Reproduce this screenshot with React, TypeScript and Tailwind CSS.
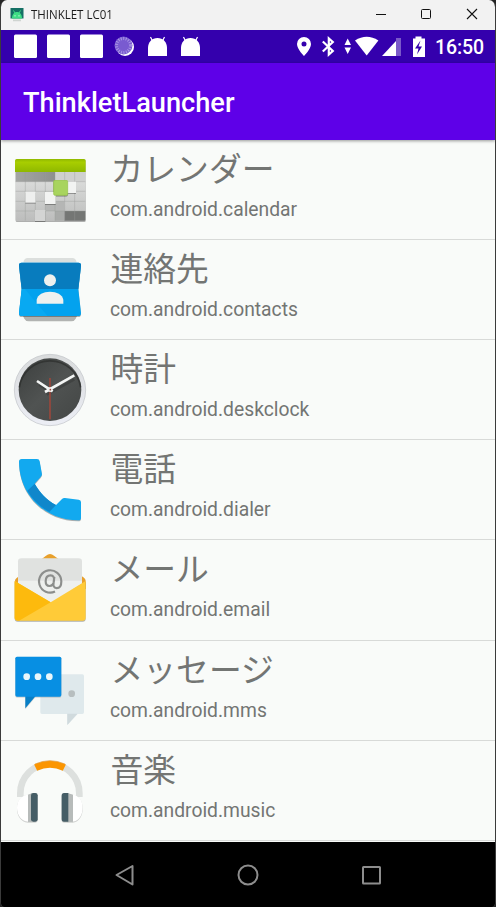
import type { ReactNode } from "react";

const roboto = "font-[Roboto,'Noto_Sans_CJK_JP',sans-serif]";

function AppIcon({ children }: { children: ReactNode }) {
  return (
    <svg className="h-[100px] w-[109px] shrink-0" viewBox="3 0 327 300">
      {children}
    </svg>
  );
}

const soft = { filter: "drop-shadow(0 3px 2px rgba(0,0,0,.3))" };

function CalendarIcon() {
  return (
    <AppIcon>
      <defs>
        <linearGradient id="calGreen" x1="0" y1="0" x2="0" y2="1">
          <stop offset="0" stopColor="#91b900" />
          <stop offset=".25" stopColor="#a8ce00" />
          <stop offset="1" stopColor="#8fb800" />
        </linearGradient>
        <linearGradient id="calGrid" x1="0" y1="0" x2="0" y2="1">
          <stop offset="0" stopColor="#c4c5c4" />
          <stop offset=".3" stopColor="#dcdddc" />
          <stop offset="1" stopColor="#bcbdbc" />
        </linearGradient>
        <linearGradient id="calDark" x1="0" y1="0" x2="1" y2="0">
          <stop offset="0" stopColor="#a4a6a4" />
          <stop offset="1" stopColor="#8e908e" />
        </linearGradient>
      </defs>
      <g style={soft}>
        <rect x="47" y="59" width="210" height="184" rx="4" fill="url(#calGrid)" />
      </g>
      <rect x="47" y="96" width="118" height="29" fill="url(#calDark)" />
      <rect x="165" y="96" width="91" height="29" fill="#cfd0cf" />
      <path d="M193 213h63v26q0 3-3 3h-60z" fill="#747674" />
      <rect x="165" y="213" width="28" height="29" fill="#a9aba9" />
      <rect x="136" y="184" width="57" height="29" fill="#b5b6b5" />
      <path d="M76 96v146M106 96v146M136 96v146M165 96v146M194 96v146M224 96v146M47 125h209M47 154h209M47 184h209M47 213h209" stroke="#999b99" strokeWidth="1.5" fill="none" opacity=".75" />
      <path d="M45 96V62q0-5 5-5h202q5 0 5 5v34z" fill="url(#calGreen)" />
      <g style={soft}>
        <rect x="76" y="155" width="31" height="33" fill="#eeefee" />
        <rect x="105" y="210" width="31" height="33" fill="#d3d4d3" />
        <rect x="135" y="156" width="32" height="36" fill="#f2f3f2" />
        <rect x="198" y="125" width="30" height="34" fill="#f2f3f2" />
        <rect x="161" y="121" width="42" height="45" rx="4" fill="#a8d45e" stroke="#94c246" strokeWidth="2" />
      </g>
    </AppIcon>
  );
}

function ContactsIcon() {
  return (
    <AppIcon>
      <path d="M70 68q2-14 13-14h134q11 0 13 14z" fill="#dcdfdd" />
      <path d="M68 226h164l-5 10q-4 8-13 8H86q-9 0-13-8z" fill="#b1b3b1" />
      <g style={soft}>
        <path d="M57 77q-1-9 8-9h170q9 0 8 9l-8 70 8 71q1 10-9 10H66q-10 0-9-10l8-71z" fill="#03a2ee" />
      </g>
      <path d="M57 77q-1-9 8-9h170q9 0 8 9l-8 70H65z" fill="#087cbe" />
      <path d="M111 191l32 37H66q-8 0-9-8l8-73h60z" fill="#08a9f2" />
      <path d="M111 191L75 147h60z" fill="#03a2ee" />
      <circle cx="150" cy="121" r="18" fill="#eef1ef" />
      <path d="M110 191v-12c3-16 20-24 40-24s37 8 40 24v12z" fill="#eef1ef" />
    </AppIcon>
  );
}

function ClockIcon() {
  return (
    <AppIcon>
      <defs>
        <linearGradient id="clockRim" x1="0" y1="0" x2="0" y2="1">
          <stop offset="0" stopColor="#d9dbdc" />
          <stop offset="1" stopColor="#eceef5" />
        </linearGradient>
        <linearGradient id="clockFace" x1="0" y1="0" x2="1" y2="1">
          <stop offset="0" stopColor="#3c3f3e" />
          <stop offset=".5" stopColor="#505352" />
          <stop offset="1" stopColor="#434645" />
        </linearGradient>
      </defs>
      <circle cx="150" cy="150" r="107" fill="url(#clockRim)" stroke="#bfc2c7" strokeWidth="2" />
      <circle cx="150" cy="149" r="94" fill="url(#clockFace)" />
      <path d="M58 142a93 93 0 0 1 184 0" fill="none" stroke="#292b2a" strokeWidth="5" opacity=".65" />
      <path d="M140 164l83-46M118 134l38 25" stroke="#292b2a" strokeWidth="8" opacity=".35" />
      <path d="M150 114v124" stroke="#98483d" strokeWidth="5" />
      <path d="M135 156l88-50M111 123l47 31" stroke="#f4f6f5" strokeWidth="8" />
      <circle cx="150" cy="149" r="7" fill="#edf0ef" />
      <circle cx="151" cy="149" r="2.5" fill="#9c4238" />
    </AppIcon>
  );
}

function PhoneIcon() {
  return (
    <AppIcon>
      <g style={soft}>
        <path d="M65 57h46q7 0 8 7l7 39q0 4-4 8l-18 20c17 29 37 50 64 64l18-18q4-4 9-3l41 5q7 1 7 8v46q0 8-8 8C135 240 58 166 57 65q0-8 8-8z" fill="#12a9ef" />
      </g>
      <path d="M82 152l22-21c17 29 37 49 64 64l-20 21c-28-15-50-37-66-64z" fill="#1087cb" />
    </AppIcon>
  );
}

function MailIcon() {
  return (
    <AppIcon>
      <path d="M45 122q0-5 5-8l88-67q12-10 24 0l90 66q5 4 5 9v25H45z" fill="#e8a02b" />
      <path d="M54 130V65q0-10 10-10h172q10 0 10 10v65l-95 57z" fill="#e0e2e0" />
      <path d="M54 122h192v9l-95 57-97-57z" fill="#eef0ee" />
      <g style={soft}>
        <path d="M44 123l108 64 105-64v110q0 9-9 9H53q-9 0-9-9z" fill="#ffcb38" />
      </g>
      <path d="M44 123l108 64-95 55q-13 0-13-9z" fill="#fdba0d" />
      <path d="M165 154.500a33.500 33.500 0 1 1 19-31c0 16-7 21-14 21-9 0-11-8-9-18l2-16M162 122c-1 10-7 16-14 16-8 0-11-6-11-14 0-11 6-18 15-18 8 0 11 6 10 16z" fill="none" stroke="#8c8e8c" strokeWidth="6.500" />
    </AppIcon>
  );
}

function MessagesIcon() {
  return (
    <AppIcon>
      <path d="M126 100h121q5 0 5 5v109q0 5-5 5h-14l-31 33v-33h-76q-5 0-5-5V105q0-5 5-5z" fill="#dfe9ec" />
      <path d="M202 218h30l-30 34z" fill="#d0dadd" />
      <circle cx="215" cy="158" r="10" fill="#b7bebf" />
      <g style={{ filter: "drop-shadow(0 2px 2px rgba(0,0,0,.2))" }}>
        <path d="M76 165h31l-31 37z" fill="#087fc6" />
        <rect x="46" y="47" width="138" height="120" rx="5" fill="#078fe3" />
      </g>
      <circle cx="80" cy="107" r="10" fill="#e9f7fb" />
      <circle cx="114" cy="107" r="10" fill="#e9f7fb" />
      <circle cx="148" cy="107" r="10" fill="#e9f7fb" />
    </AppIcon>
  );
}

function MusicIcon() {
  return (
    <AppIcon>
      <path d="M61 168v-11a88.500 88.500 0 0 1 177 0v11" fill="none" stroke="#dde0de" strokeWidth="20" />
      <path d="M107 80q43-21 86 0" fill="none" stroke="#fb9500" strokeWidth="21" />
      <path d="M105 69q45-20 90 0" fill="none" stroke="#e6a34b" strokeWidth="2" />
      <g style={{ filter: "drop-shadow(0 2px 2px rgba(0,0,0,.25))" }}>
        <path d="M84 161c-22 3-33 18-33 39s11 39 33 42zM218 161c20 3 30 18 30 39s-10 39-30 42z" fill="#fff" />
        <path d="M84 161l14-5v86H84zM202 156l17 5v81h-17z" fill="#b7bbba" />
        <rect x="93" y="156" width="20" height="86" rx="7" fill="#455d66" />
        <path d="M192 156h13v86h-13q-7 0-7-8v-70q0-8 7-8z" fill="#455d66" />
      </g>
    </AppIcon>
  );
}

const apps = [
  { name: "カレンダー", id: "com.android.calendar", icon: <CalendarIcon /> },
  { name: "連絡先", id: "com.android.contacts", icon: <ContactsIcon /> },
  { name: "時計", id: "com.android.deskclock", icon: <ClockIcon /> },
  { name: "電話", id: "com.android.dialer", icon: <PhoneIcon /> },
  { name: "メール", id: "com.android.email", icon: <MailIcon /> },
  { name: "メッセージ", id: "com.android.mms", icon: <MessagesIcon /> },
  { name: "音楽", id: "com.android.music", icon: <MusicIcon /> },
];

function TitleBar() {
  return (
    <header className="flex h-[30px] items-center bg-[#f2f2f2] pl-[9px]">
      <svg className="h-[15px] w-[15px]" viewBox="0 0 15 15">
        <path d="M.500 0h13v10.500H.500z" fill="#147064" />
        <path d="M2 10.500c0-4 2-6.500 5-6.500s5 2.500 5 6.500z" fill="#3ddc84" />
        <path d="M3.500 2.500L5 5M10.500 2.500L9 5" stroke="#3ddc84" />
        <circle cx="5" cy="7.800" r=".6" fill="#fff" />
        <circle cx="9" cy="7.800" r=".6" fill="#fff" />
        <path d="M3 11.500h8v1.700H3z" fill="#cfd4d1" />
      </svg>
      <h1 className="ml-[6px] origin-left scale-x-[.92] whitespace-nowrap font-['Open_Sans','Noto_Sans',sans-serif] text-[12.5px] leading-[30px] text-[#1b1b1b]">THINKLET LC01</h1>
      <svg className="ml-auto h-[30px] w-[128px]" viewBox="0 0 128 30" fill="none" stroke="#111">
        <path d="M9 14.500h10" />
        <rect x="54.500" y="9.500" width="9" height="9" rx="1" />
        <path d="M100 9l10 10M110 9l-10 10" strokeWidth="1.100" />
      </svg>
    </header>
  );
}

function StatusBar() {
  return (
    <div className={`flex h-[33px] bg-[#3400ad] text-white ${roboto}`}>
      <svg className="h-[33px] w-[220px]" viewBox="1 30 220 33" fill="#fff">
        <rect x="14" y="34.500" width="23" height="23.500" rx="1.500" />
        <rect x="47" y="34.500" width="23" height="23.500" rx="1.500" />
        <rect x="80" y="34.500" width="23" height="23.500" rx="1.500" />
        <circle cx="125" cy="47" r="9" />
        <circle cx="123.500" cy="45.500" r="9" fill="#795bd0" />
        <circle cx="123.500" cy="45.500" r="7" fill="none" stroke="#aa96e4" strokeWidth="3" strokeDasharray="1 1.500" />
        {[148, 181].map((x) => (
          <g key={x}>
            <path d={`M${x} 56V48c0-6 4-10 9.500-10s9.500 4 9.500 10v8z`} />
            <path d={`M${x + 2.5} 37l2 4M${x + 16.5} 37l-2 4`} stroke="#fff" strokeWidth="1.200" />
          </g>
        ))}
      </svg>
      <svg className="ml-auto h-[33px] w-[140px]" viewBox="294 30 140 33" fill="#fff">
        <path fillRule="evenodd" d="M304 37a7 7 0 0 0-7 7c0 5 7 12 7 12s7-7 7-12a7 7 0 0 0-7-7zm0 4.500a2.500 2.500 0 1 1 0 5 2.500 2.500 0 0 1 0-5z" />
        <path d="M322.800 41.500l10 9.500-4 3.500v-16l4 3.500-10 9.500" fill="none" stroke="#fff" strokeWidth="2.200" />
        <path d="M344.500 45l3.200-6.500L351 45zM344.500 47.500l3.200 6.500 3.300-6.500z" />
        <path d="M355 40.500q11.700-7.500 23.400 0L366.700 55.500z" />
        <path d="M396 38h5v18h-5z" opacity=".35" />
        <path d="M382 56l14-15v15z" />
        <path d="M415.500 36.500h6v2h3.500v18.500h-12V38.500h2.500z" />
        <path d="M420.500 40.500l-5.500 8h3.500l-1.500 6 5-8h-3.500z" fill="#3400ad" />
      </svg>
      <time className="w-[61px] whitespace-nowrap pl-px text-[19.500px] font-medium leading-[35px] tracking-[-0.1px]">16:50</time>
    </div>
  );
}

export default function App() {
  return (
    <div className="h-[907px] w-[496px] bg-[#252525]">
      <div className="flex h-[907px] w-[496px] flex-col overflow-hidden rounded-t-[7px] rounded-b-[5px] border-x border-[#3b3b3b] bg-black">
        <TitleBar />
        <StatusBar />
        <div className={`relative z-10 flex h-[77px] items-center bg-[#5e00e8] pl-[22px] pt-[3px] text-[27.2px] font-medium text-white shadow-[0_1px_3px_rgba(0,0,0,.4)] ${roboto}`}>
          <h2>ThinkletLauncher</h2>
        </div>
        <main className="h-[702px] bg-[#f9fbf9]">
          {apps.map((app) => (
            <section key={app.id} className={`flex h-[100.11px] border-b border-[#d8dad8] text-[#737573] ${roboto}`}>
              {app.icon}
              <div className="flex flex-col whitespace-nowrap">
                <h3 className="ml-[0.5px] mt-[3px] font-['Noto_Sans_CJK_JP',sans-serif] text-[32.8px] leading-[47px]">{app.name}</h3>
                <p className="mt-[7px] text-[19.3px] leading-[26px]">{app.id}</p>
              </div>
            </section>
          ))}
        </main>
        <nav className="h-[65px] bg-black">
          <svg className="h-[65px] w-[494px]" viewBox="1 842 494 65" fill="none" stroke="#8d8d8d" strokeWidth="2">
            <path d="M132.500 866v18.500L116.500 875z" strokeLinejoin="round" />
            <circle cx="248" cy="875" r="9.500" />
            <rect x="363" y="867" width="17" height="16.500" rx=".5" />
          </svg>
        </nav>
      </div>
    </div>
  );
}
